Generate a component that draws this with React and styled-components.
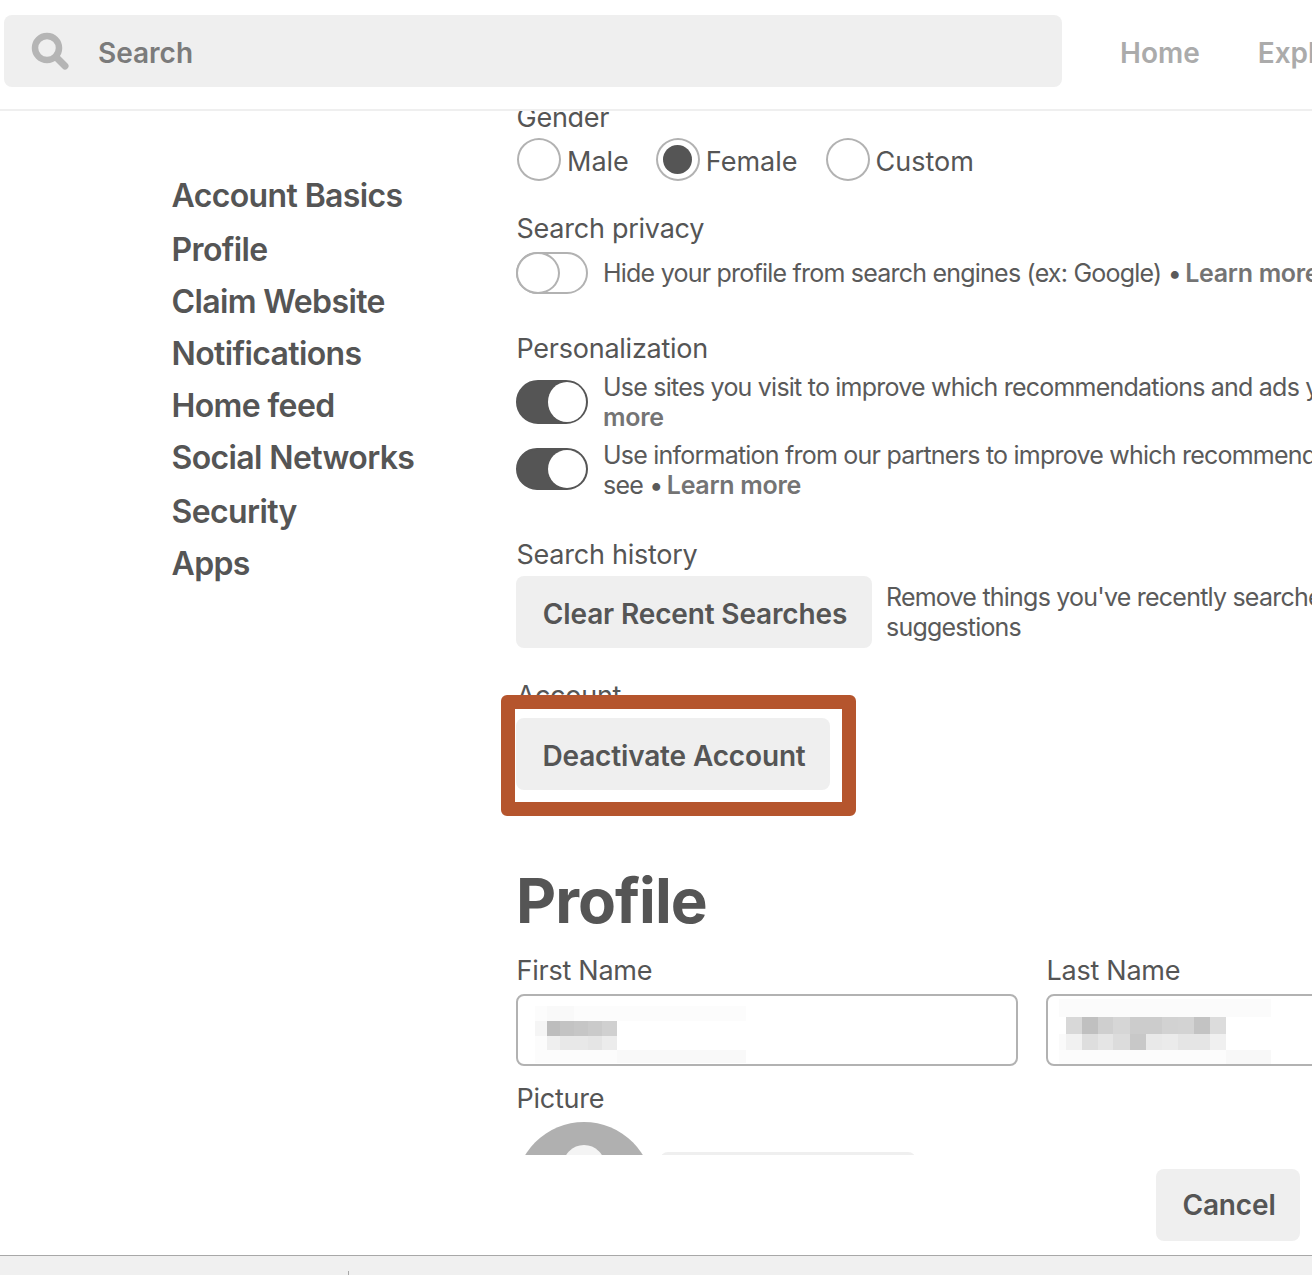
import React from 'react';
import styled, { createGlobalStyle } from 'styled-components';

const GlobalStyle = createGlobalStyle`
  html, body {
    margin: 0;
    padding: 0;
    background: #ffffff;
    font-family: Inter, "Liberation Sans", sans-serif;
    color: #555555;
  }
`;

const Page = styled.div`
  width: 1312px;
  height: 1275px;
  display: flex;
  flex-direction: column;
  overflow: hidden;
  position: relative;
`;

const Header = styled.header`
  flex: 0 0 111px;
  box-sizing: border-box;
  border-bottom: 2px solid #efefef;
  display: flex;
  align-items: flex-start;
  padding: 15px 0 0 4px;
  white-space: nowrap;
`;

const SearchBox = styled.div`
  width: 1058px;
  height: 72px;
  flex: none;
  background: #efefef;
  border-radius: 8px;
  display: flex;
  align-items: center;
  padding-left: 27px;
  box-sizing: border-box;
`;

const SearchText = styled.span`
  margin: 4px 0 0 29px;
  font-size: 28px;
  font-weight: 600;
  color: #7b7b7b;
`;

const NavLink = styled.a`
  font-size: 28px;
  font-weight: 600;
  color: #ababab;
  line-height: 76px;
  margin-left: ${(props) => props.$left}px;
`;

const Body = styled.div`
  flex: 0 0 1044px;
  overflow: hidden;
  display: flex;
  align-items: flex-start;
`;

const Sidebar = styled.nav`
  flex: 0 0 516px;
  box-sizing: border-box;
  padding: 59px 0 0 171.5px;
`;

const SideItem = styled.div`
  font-size: 32px;
  font-weight: 600;
  line-height: 52px;
  color: #555555;
  letter-spacing: -0.62px;
  white-space: nowrap;
  &:nth-child(1),
  &:nth-child(6) {
    margin-bottom: 2px;
  }
`;

const Main = styled.main`
  flex: none;
  width: 796px;
  margin-top: -9px;
  white-space: nowrap;
`;

const Label = styled.div`
  font-size: 27px;
  line-height: 32px;
  height: 30px;
  padding-left: 0.5px;
  letter-spacing: -0.25px;
  color: #555555;
  margin-top: ${(props) => props.$top || 0}px;
`;

const RadioRow = styled.div`
  display: flex;
  align-items: center;
  margin: 6px 0 0 1px;
`;

const RadioCircle = styled.span`
  width: 44px;
  height: 43px;
  box-sizing: border-box;
  border: 2px solid #b2b2b2;
  border-radius: 50%;
  display: flex;
  align-items: center;
  justify-content: center;
  flex: none;
  margin-left: ${(props) => props.$left || 0}px;

  &::after {
    content: '';
    display: ${(props) => (props.$checked ? 'block' : 'none')};
    width: 29px;
    height: 29px;
    border-radius: 50%;
    background: #555555;
  }
`;

const RadioText = styled.span`
  font-size: 27px;
  line-height: 30px;
  margin: 4px 0 0 6px;
`;

const ToggleRow = styled.div`
  display: flex;
  align-items: flex-start;
  margin-top: ${(props) => props.$top || 0}px;
`;

const Toggle = styled.span`
  width: 72px;
  height: ${(props) => props.$height || 42}px;
  flex: none;
  box-sizing: border-box;
  border: 2px solid ${(props) => (props.$on ? '#555555' : '#b2b2b2')};
  border-radius: 22px;
  background: ${(props) => (props.$on ? '#555555' : '#ffffff')};
  display: flex;
  justify-content: ${(props) => (props.$on ? 'flex-end' : 'flex-start')};
  margin-top: ${(props) => props.$shift || 0}px;
`;

const ToggleKnob = styled.span`
  flex: none;
  box-sizing: border-box;
  border-radius: 50%;
  background: #ffffff;
  width: ${(props) => (props.$on ? '38px' : '44px')};
  height: ${(props) => (props.$on ? '100%' : '42px')};
  margin: ${(props) => (props.$on ? '0' : '-2px 0 0 -2px')};
  border: ${(props) => (props.$on ? '0' : '2px solid #b2b2b2')};
`;

const RowText = styled.div`
  font-size: 25px;
  line-height: 30px;
  letter-spacing: -0.78px;
  color: #5a5a5a;
  margin-left: ${(props) => props.$left || 15}px;
  margin-top: ${(props) => props.$top || 0}px;
`;

const LearnLink = styled.b`
  font-weight: 600;
  letter-spacing: -0.3px;
  color: #747474;
  margin-left: ${(props) => props.$pull || 0}px;
`;

const GreyButton = styled.button`
  border: 0;
  padding: 4px 0 0 2px;
  height: 72px;
  width: ${(props) => props.$width}px;
  flex: none;
  border-radius: 8px;
  background: #efefef;
  color: #555555;
  font-family: inherit;
  font-size: 28px;
  font-weight: 600;
  letter-spacing: -0.15px;
`;

const CancelButton = styled(GreyButton)`
  padding-top: 0;
`;

const ButtonRow = styled.div`
  display: flex;
  align-items: flex-start;
  margin-top: 7px;
`;

const Highlighted = styled.div`
  position: relative;
  width: 314px;
  margin-top: 8px;
`;

const HighlightFrame = styled.div`
  position: absolute;
  left: -15px;
  top: -23px;
  width: 355px;
  height: 121px;
  box-sizing: border-box;
  border: 14px solid #b5552d;
  border-radius: 6px;
`;

const Title = styled.h1`
  margin: 73px 0 0;
  font-size: 62px;
  line-height: 76px;
  font-weight: 700;
  color: #555555;
  letter-spacing: -1px;
`;

const NameGrid = styled.div`
  display: grid;
  grid-template-columns: 502px 300px;
  column-gap: 28px;
  margin-top: 16px;
`;

const NameInput = styled.div`
  height: 72px;
  width: ${(props) => props.$width}px;
  box-sizing: border-box;
  border: 2px solid #b2b2b2;
  border-radius: 8px;
  margin-top: 9px;
  background: #ffffff;
  overflow: hidden;
  padding: ${(props) => props.$pad};

  svg {
    display: block;
  }
`;

const PictureRow = styled.div`
  display: flex;
  align-items: flex-start;
  margin: 9px 0 0 -1px;
  height: 160px;
`;

const UploadButton = styled.div`
  width: 256px;
  height: 72px;
  margin: 30px 0 0 7px;
  border-radius: 8px;
  background: #efefef;
`;

const Footer = styled.footer`
  flex: 0 0 100px;
  box-sizing: border-box;
  display: flex;
  justify-content: flex-end;
  padding: 14px 12px 0 0;
`;

const BottomBar = styled.div`
  flex: 0 0 20px;
  box-sizing: border-box;
  border-top: 1px solid #a8a8a8;
  background: #f0f0f0;
  position: relative;
`;

const BarTick = styled.span`
  position: absolute;
  left: 348px;
  bottom: 0;
  width: 1px;
  height: 4px;
  background: #a8a8a8;
`;

const sections = [
  'Account Basics',
  'Profile',
  'Claim Website',
  'Notifications',
  'Home feed',
  'Social Networks',
  'Security',
  'Apps',
];

// rows are [y, height, cells], cells are [x, width, colour]
const firstNameBlocks = [
  [0, 15, [[0, 211, '#fcfcfc'], [12, 27, '#f9f9f9']]],
  [15, 15, [[0, 12, '#f5f5f5'], [12, 13, '#bdbdbd'], [25, 14, '#c3c3c3'], [39, 14, '#c6c6c6'], [53, 14, '#cacaca'], [67, 15, '#d0d0d0']]],
  [30, 14, [[0, 12, '#fcfcfc'], [12, 13, '#efefef'], [25, 28, '#e8e8e8'], [53, 14, '#e5e5e5'], [67, 15, '#ececec']]],
  [44, 13, [[0, 82, '#fcfcfc'], [82, 129, '#f9f9f9']]],
];

const lastNameBlocks = [
  [0, 18, [[0, 212, '#fbfbfb']]],
  [18, 17, [[7, 16, '#d8d8d8'], [23, 16, '#c0c0c0'], [39, 15, '#cfcfcf'], [54, 17, '#d6d6d6'], [71, 32, '#cccccc'], [103, 16, '#d2d2d2'], [119, 16, '#d3d3d3'], [135, 16, '#c3c3c3'], [151, 16, '#dcdcdc']]],
  [35, 16, [[0, 7, '#fafafa'], [7, 16, '#f1f1f1'], [23, 16, '#dedede'], [39, 15, '#e5e5e5'], [54, 17, '#dcdcdc'], [71, 16, '#c8c8c8'], [87, 16, '#e9e9e9'], [103, 16, '#ebebeb'], [119, 32, '#e5e5e5'], [151, 16, '#f0f0f0']]],
  [51, 14, [[0, 167, '#fcfcfc'], [167, 45, '#f8f8f8']]],
];

const Mosaic = ({ rows, width, height }) => (
  <svg width={width} height={height} shapeRendering="crispEdges">
    {rows.map(([y, h, cells]) =>
      cells.map(([x, w, fill]) => (
        <rect key={`${y}-${x}`} x={x} y={y} width={w} height={h} fill={fill} />
      ))
    )}
  </svg>
);

const SearchIcon = () => (
  <svg width="38" height="38" viewBox="0 0 38 38" fill="none">
    <circle cx="16" cy="16" r="12" stroke="#b5b5b5" strokeWidth="6.5" />
    <path d="M25 25 L34 34" stroke="#b5b5b5" strokeWidth="7" strokeLinecap="round" />
  </svg>
);

const Avatar = () => (
  <svg width="138" height="138" viewBox="0 0 138 138">
    <circle cx="69" cy="69" r="69" fill="#b0b0b0" />
    <circle cx="69" cy="44" r="21" fill="#f4f4f4" />
  </svg>
);

const App = () => {
  return (
    <Page>
      <GlobalStyle />
      <Header>
        <SearchBox>
          <SearchIcon />
          <SearchText>Search</SearchText>
        </SearchBox>
        <NavLink $left={58}>Home</NavLink>
        <NavLink $left={58}>Explore</NavLink>
      </Header>
      <Body>
        <Sidebar>
          {sections.map((name) => (
            <SideItem key={name}>{name}</SideItem>
          ))}
        </Sidebar>
        <Main>
          <Label>Gender</Label>
          <RadioRow>
            <RadioCircle />
            <RadioText>Male</RadioText>
            <RadioCircle $left={27} $checked />
            <RadioText>Female</RadioText>
            <RadioCircle $left={28} />
            <RadioText>Custom</RadioText>
          </RadioRow>

          <Label $top={32}>Search privacy</Label>
          <ToggleRow $top={9}>
            <Toggle>
              <ToggleKnob />
            </Toggle>
            <RowText $top={6}>
              Hide your profile from search engines (ex: Google) • <LearnLink $pull={-2}>Learn more</LearnLink>
            </RowText>
          </ToggleRow>

          <Label $top={39}>Personalization</Label>
          <ToggleRow $top={9}>
            <Toggle $on $shift={8} $height={44}>
              <ToggleKnob $on />
            </Toggle>
            <RowText>
              Use sites you visit to improve which recommendations and ads you see • <LearnLink>Learn</LearnLink>
              <br />
              <LearnLink>more</LearnLink>
            </RowText>
          </ToggleRow>
          <ToggleRow $top={8}>
            <Toggle $on $shift={8}>
              <ToggleKnob $on />
            </Toggle>
            <RowText>
              Use information from our partners to improve which recommendations and ads you
              <br />
              see • <LearnLink $pull={-2}>Learn more</LearnLink>
            </RowText>
          </ToggleRow>

          <Label $top={39}>Search history</Label>
          <ButtonRow>
            <GreyButton $width={356}>Clear Recent Searches</GreyButton>
            <RowText $top={6} $left={14}>
              Remove things you've recently searched for from your home feed and search
              <br />
              suggestions
            </RowText>
          </ButtonRow>

          <Label $top={32}>Account</Label>
          <Highlighted>
            <GreyButton $width={314}>Deactivate Account</GreyButton>
            <HighlightFrame />
          </Highlighted>

          <Title>Profile</Title>
          <NameGrid>
            <div>
              <Label>First Name</Label>
              <NameInput $width={502} $pad="10px 0 0 17px">
                <Mosaic rows={firstNameBlocks} width={211} height={57} />
              </NameInput>
            </div>
            <div>
              <Label>Last Name</Label>
              <NameInput $width={400} $pad="3px 0 0 11px">
                <Mosaic rows={lastNameBlocks} width={212} height={65} />
              </NameInput>
            </div>
          </NameGrid>
          <Label $top={17}>Picture</Label>
          <PictureRow>
            <Avatar />
            <UploadButton />
          </PictureRow>
        </Main>
      </Body>
      <Footer>
        <CancelButton $width={144}>Cancel</CancelButton>
      </Footer>
      <BottomBar>
        <BarTick />
      </BottomBar>
    </Page>
  );
};

export default App;
